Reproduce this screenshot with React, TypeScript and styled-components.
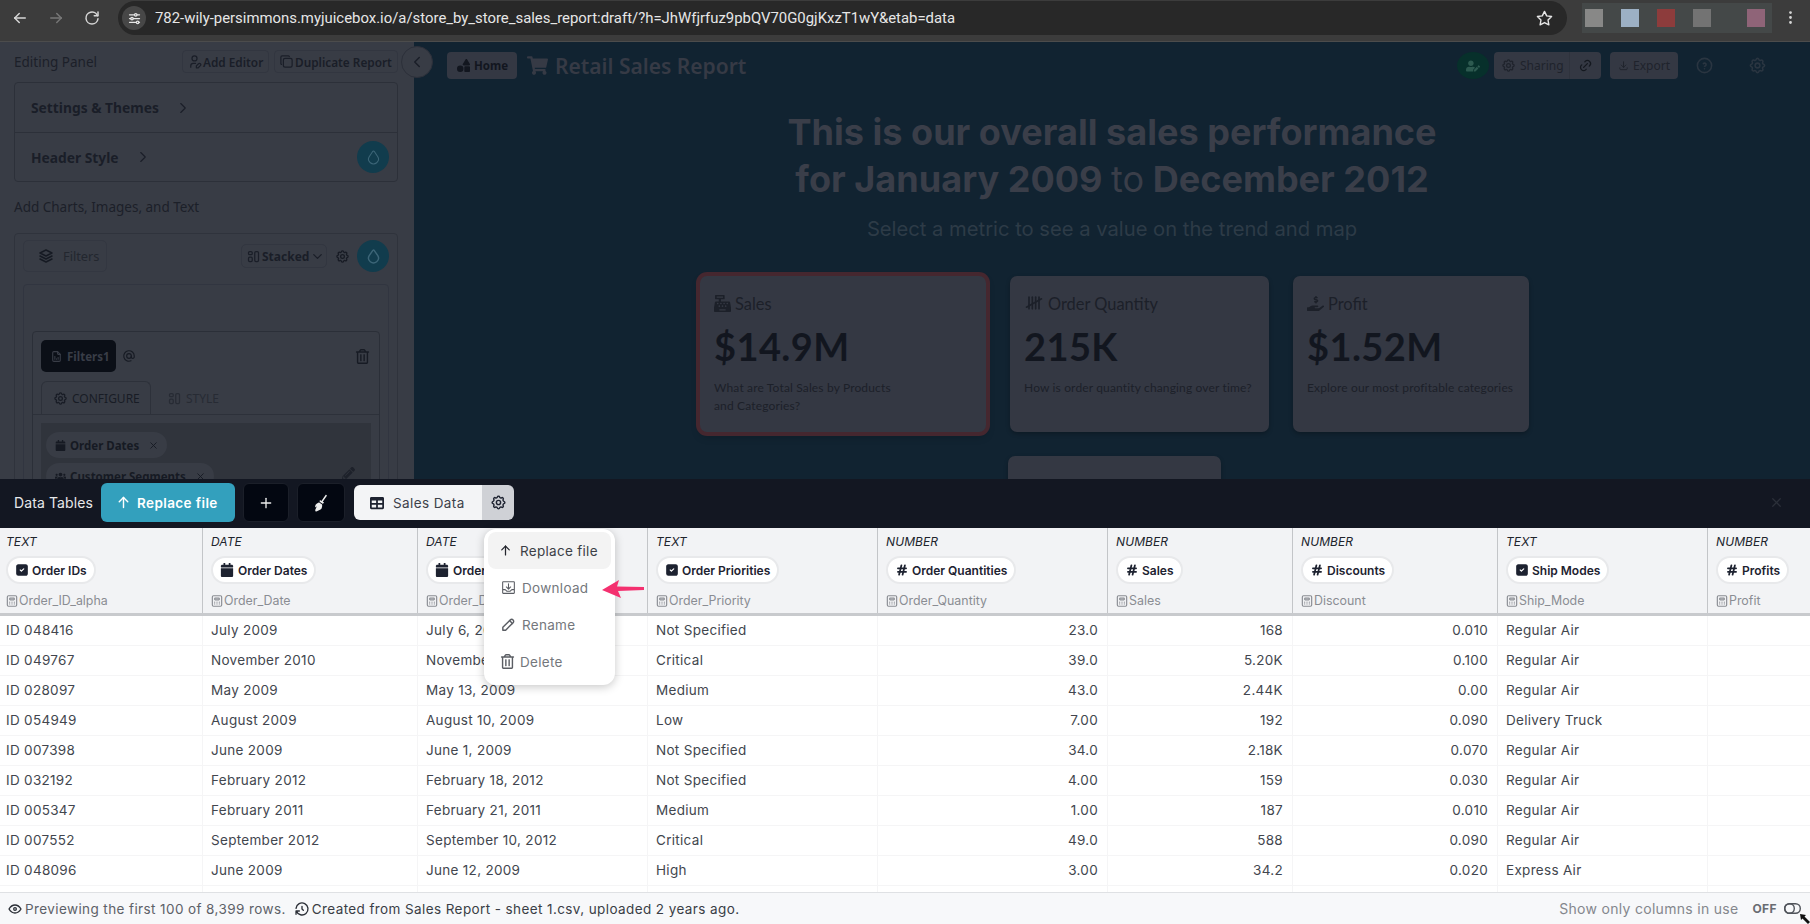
import React from "react";
import styled, { createGlobalStyle } from "styled-components";
import {
  TbArrowLeft,
  TbArrowRight,
  TbReload,
  TbStar,
  TbDotsVertical,
  TbAdjustmentsHorizontal,
  TbUserEdit,
  TbCopy,
  TbChevronRight,
  TbChevronLeft,
  TbChevronDown,
  TbDroplet,
  TbStack2,
  TbLayout,
  TbSettings,
  TbAt,
  TbFileAnalytics,
  TbX,
  TbLink,
  TbDownload,
  TbHelpCircle,
  TbTallymarks,
  TbArrowUp,
  TbPlus,
  TbCalculator,
  TbHash,
  TbSquareCheckFilled,
  TbEye,
  TbHistory,
  TbPencil,
} from "react-icons/tb";
import {
  FaCalendar,
  FaUsers,
  FaShapes,
  FaShoppingCart,
  FaCashRegister,
  FaHandHoldingUsd,
  FaBroom,
  FaTable,
  FaPencilAlt,
  FaUserEdit,
  FaRegTrashAlt,
} from "react-icons/fa";
import { PiTrayArrowDown } from "react-icons/pi";

const GlobalStyle = createGlobalStyle`
  html, body {
    margin: 0;
    padding: 0;
    background: #fff;
  }
  * {
    box-sizing: border-box;
  }
`;

const Page = styled.div`
  width: 1810px;
  height: 924px;
  display: flex;
  flex-direction: column;
  overflow: hidden;
  position: relative;
  font-family: "Inter", "Liberation Sans", sans-serif;
`;

/* browser chrome */
const BrowserBar = styled.div`
  height: 42px;
  flex: none;
  display: flex;
  align-items: flex-start;
  background: #3c3c3c;
  border-bottom: 1px solid #4c4c4c;
  padding-top: 1px;
  color: #dcdcdc;
`;

const NavButton = styled.span<{ $dim?: boolean }>`
  width: 36px;
  height: 34px;
  flex: none;
  display: flex;
  align-items: center;
  justify-content: center;
  font-size: 18px;
  color: ${(p) => (p.$dim ? "#777" : "#d6d6d6")};
`;

const NavGroup = styled.div`
  display: flex;
  padding-left: 2px;
  width: 118px;
  flex: none;
`;

const UrlPill = styled.div`
  width: 1449px;
  height: 34px;
  flex: none;
  display: flex;
  align-items: center;
  background: #282828;
  border-radius: 17px;
  padding: 0 14px 0 4px;
  color: #e6e6e6;
  font-family: "Roboto", sans-serif;
  font-size: 14.9px;
`;

const TuneBadge = styled.span`
  width: 24px;
  height: 24px;
  border-radius: 50%;
  background: #474747;
  display: flex;
  align-items: center;
  justify-content: center;
  font-size: 15px;
  margin-right: 9px;
`;

const UrlText = styled.span`
  flex: 1;
  white-space: nowrap;
`;

const Extensions = styled.div`
  width: 190px;
  height: 30px;
  margin: 2px 0 0 15px;
  flex: none;
  display: flex;
  align-items: center;
  padding-left: 3px;
  background: #444848;
`;

const ExtensionBlock = styled.span<{ $color: string; $gap: number }>`
  width: 18px;
  height: 18px;
  margin-right: ${(p) => p.$gap}px;
  background: ${(p) => p.$color};
`;

const MenuDots = styled.span`
  font-size: 17px;
  color: #d6d6d6;
  margin: 8px 0 0 10px;
  display: flex;
`;

/* dimmed report behind the data drawer */
const Workspace = styled.div`
  height: 437px;
  flex: none;
  display: flex;
  overflow: hidden;
  position: relative;
`;

const SidePanel = styled.div`
  width: 414px;
  flex: none;
  background: #383c45;
  padding: 8px 16px 0 14px;
  color: #1a1e28;
  font-family: "Noto Sans", sans-serif;
`;

const PanelTop = styled.div`
  display: flex;
  align-items: center;
  height: 23px;
  gap: 5px;
`;

const MutedLabel = styled.div`
  font-size: 13.5px;
  color: #1c2029;
`;

const PanelTitle = styled(MutedLabel)`
  flex: 1;
`;

const GhostButton = styled.span<{ $width: number }>`
  width: ${(p) => p.$width}px;
  height: 23px;
  flex: none;
  display: flex;
  align-items: center;
  gap: 1px;
  padding-left: 4px;
  border: 1px solid #323640;
  border-radius: 4px;
  font-size: 11.8px;
  font-weight: 600;
  white-space: nowrap;

  svg {
    font-size: 15px;
    flex: none;
  }
`;

const Accordion = styled.div`
  margin-top: 9px;
  border: 1px solid #2c3039;
  border-radius: 4px;
`;

const AccordionRow = styled.div`
  height: 49px;
  display: flex;
  align-items: center;
  padding: 0 8px 0 16px;
  font-size: 13.8px;
  font-weight: 700;
  gap: 15px;

  & + & {
    border-top: 1px solid #2c3039;
  }

  svg {
    font-size: 18px;
    stroke-width: 1.5;
  }
`;

const RoundSwatch = styled.span<{ $margin?: boolean }>`
  width: 32px;
  height: 32px;
  flex: none;
  border-radius: 50%;
  background: #113c4d;
  color: #3d6678;
  display: flex;
  align-items: center;
  justify-content: center;
  margin-left: ${(p) => (p.$margin ? "auto" : "0")};

  svg {
    font-size: 17px;
  }
`;

const SectionLabel = styled(MutedLabel)`
  margin-top: 16px;
  height: 35px;
  line-height: 18px;
`;

const ChartBox = styled.div`
  border: 1px solid #2f333c;
  border-radius: 4px 4px 0 0;
  padding: 6px 8px 0;
`;

const ChartBar = styled.div`
  display: flex;
  align-items: center;
  height: 32px;
`;

const FiltersButton = styled.span`
  width: 84px;
  height: 32px;
  display: flex;
  align-items: center;
  gap: 8px;
  padding-left: 13px;
  border: 1px solid #333741;
  border-radius: 5px;
  font-size: 12.8px;
  color: #23272f;

  svg {
    font-size: 18px;
    color: #161a23;
  }
`;

const StackedSelect = styled.span`
  margin-left: auto;
  width: 86px;
  height: 24px;
  display: flex;
  align-items: center;
  gap: 1px;
  padding-left: 4px;
  border: 1px solid #323640;
  border-radius: 5px;
  font-size: 12px;
  font-weight: 700;

  svg {
    font-size: 15px;
    flex: none;
  }
`;

const PlainIcon = styled.span<{ $size?: number }>`
  display: flex;
  align-items: center;
  justify-content: center;
  font-size: ${(p) => p.$size ?? 15}px;
  color: #171b24;
`;

const GearSlot = styled(PlainIcon)`
  width: 30px;
`;

const InnerBox = styled.div`
  margin-top: 12px;
  height: 200px;
  border: 1px solid #313540;
  border-radius: 4px 4px 0 0;
  padding: 46px 8px 0;
`;

const WidgetBox = styled.div`
  height: 200px;
  border: 1px solid #2b2f38;
  border-radius: 4px 4px 0 0;
  padding-top: 8px;
`;

const WidgetHead = styled.div`
  display: flex;
  align-items: center;
  gap: 6px;
  padding: 0 9px 0 8px;
  height: 32px;
`;

const WidgetName = styled.span`
  width: 75px;
  height: 32px;
  display: flex;
  align-items: center;
  gap: 4px;
  padding-left: 9px;
  background: #0b0f17;
  border-radius: 5px;
  color: #393d47;
  font-size: 11.5px;
  font-weight: 700;

  svg {
    font-size: 13px;
  }
`;

const TrashSlot = styled(PlainIcon)`
  margin-left: auto;
`;

const TabRow = styled.div`
  margin-top: 9px;
  height: 34px;
  display: flex;
  padding-left: 8px;
  border-bottom: 1px solid #2d313a;
`;

const TabItem = styled.span<{ $active?: boolean }>`
  display: flex;
  align-items: center;
  gap: 4px;
  height: 34px;
  width: ${(p) => (p.$active ? "110px" : "auto")};
  padding-left: ${(p) => (p.$active ? "11px" : "16px")};
  border: ${(p) => (p.$active ? "1px solid #2d313a" : "none")};
  border-bottom: none;
  border-radius: 6px 6px 0 0;
  font-size: 12px;
  color: ${(p) => (p.$active ? "#181c25" : "#272b34")};

  svg {
    font-size: 15px;
  }
`;

const ChipTray = styled.div`
  margin: 8px 8px 0;
  padding: 9px 5px;
  height: 100px;
  background: #30343c;
  display: flex;
  flex-direction: column;
  align-items: flex-start;
  gap: 5px;
  position: relative;
`;

const DimChip = styled.span`
  height: 26px;
  display: flex;
  align-items: center;
  gap: 4px;
  padding: 0 8px 0 9px;
  background: #383c45;
  border-radius: 13px;
  font-size: 11.5px;
  font-weight: 700;
  color: #161a23;

  svg {
    font-size: 11px;
  }
`;

const ChipClose = styled.span`
  display: flex;
  margin-left: 5px;
  font-size: 12px;
`;

const TrayPencil = styled.span`
  position: absolute;
  right: 16px;
  top: 43px;
  font-size: 13px;
  color: #1d212a;
`;

const CollapseHandle = styled.span`
  position: absolute;
  left: 401px;
  top: 4px;
  width: 32px;
  height: 32px;
  border-radius: 50%;
  background: #383c45;
  border: 1px solid #2c303a;
  display: flex;
  align-items: center;
  justify-content: center;
  font-size: 18px;
  color: #1a1e28;
`;

const ReportArea = styled.div`
  flex: 1;
  min-width: 0;
  background: #112331;
  font-family: "Lato", sans-serif;
`;

const ReportTop = styled.div`
  display: flex;
  align-items: center;
  height: 27px;
  margin-top: 10px;
  padding-left: 33px;
  font-family: "Noto Sans", sans-serif;
`;

const HomeButton = styled.span`
  width: 70px;
  height: 27px;
  display: flex;
  align-items: center;
  gap: 4px;
  padding-left: 10px;
  background: #343843;
  border-radius: 4px;
  color: #12161f;
  font-size: 11.5px;
  font-weight: 700;

  svg {
    font-size: 13px;
  }
`;

const ReportTitle = styled.div`
  display: flex;
  align-items: center;
  gap: 7px;
  margin-left: 10px;
  font-size: 21px;
  font-weight: 600;
  color: #363a45;
  white-space: nowrap;

  svg {
    font-size: 21px;
  }
`;

const TopActions = styled.div`
  margin-left: auto;
  display: flex;
  align-items: center;
  height: 27px;
  padding-right: 43px;
`;

const GreenBadge = styled.span`
  width: 32px;
  height: 27px;
  border-radius: 50%;
  background: #07302b;
  color: #2d5a50;
  display: flex;
  align-items: center;
  justify-content: center;
  font-size: 14px;
  margin-right: 5px;
`;

const ActionButton = styled.span`
  height: 27px;
  display: flex;
  align-items: center;
  gap: 4px;
  padding: 0 8px;
  background: #343843;
  border-radius: 4px;
  color: #1f232c;
  font-size: 12px;

  svg {
    font-size: 15px;
  }
`;

const SharingButton = styled(ActionButton)`
  width: 76px;
  padding: 0 0 0 7px;
  border-radius: 4px 0 0 4px;
  border-right: 1px solid #2f333d;
`;

const LinkButton = styled(ActionButton)`
  width: 31px;
  padding: 0 0 0 8px;
  border-radius: 0 4px 4px 0;
  color: #14181f;
`;

const ExportButton = styled(ActionButton)`
  width: 68px;
  margin-left: 9px;
`;

const QuietIcon = styled.span<{ $left: number }>`
  display: flex;
  margin-left: ${(p) => p.$left}px;
  font-size: 19px;
  color: #2a3541;
`;

const Headline = styled.h1`
  margin: 30px 0 0;
  text-align: center;
  font-family: "Inter", sans-serif;
  font-size: 36.1px;
  line-height: 47px;
  font-weight: 700;
  color: #3a3e49;
`;

const HeadlineLight = styled.span`
  font-weight: 400;
`;

const Subhead = styled.div`
  margin-top: 13px;
  text-align: center;
  font-family: "Inter", sans-serif;
  font-size: 20.2px;
  line-height: 26px;
  color: #2d3b47;
`;

const CardWrap = styled.div`
  margin: 34px auto 0;
  padding-left: 5px;
  width: 845px;
  display: flex;
  flex-wrap: wrap;
  justify-content: center;
  gap: 24px;
`;

const MetricCard = styled.div<{ $width: number; $active?: boolean }>`
  width: ${(p) => p.$width}px;
  height: 156px;
  padding: 17px 14px 0;
  background: #343843;
  border-radius: 7px;
  color: #12161f;
  box-shadow: ${(p) =>
    p.$active ? "0 0 0 4px #45272f, 0 4px 8px rgba(0,0,0,.25)" : "0 2px 4px rgba(0,0,0,.25)"};
`;

const MetricLabel = styled.div`
  display: flex;
  align-items: center;
  gap: 4px;
  height: 20px;
  font-size: 16.4px;
  color: #1c2029;

  svg {
    font-size: 17px;
  }
`;

const MetricValue = styled.div`
  margin-top: 11px;
  font-size: 38px;
  line-height: 44px;
  font-weight: 700;
  letter-spacing: 0.4px;
`;

const MetricText = styled.div`
  margin-top: 11px;
  font-size: 12px;
  letter-spacing: 0.15px;
  line-height: 18px;
  color: #1c2029;
  white-space: pre-line;
`;

/* data drawer */
const DrawerBar = styled.div`
  height: 49px;
  flex: none;
  background: #131722;
  display: flex;
  align-items: center;
  padding: 0 0 2px 14px;
  color: #e7e8ea;
  font-size: 14px;
  position: relative;
`;

const DrawerTitle = styled.span`
  width: 87px;
  flex: none;
  letter-spacing: 0.1px;
`;

const ReplaceButton = styled.span`
  width: 134px;
  height: 39px;
  display: flex;
  align-items: center;
  gap: 5px;
  padding-left: 14px;
  background: #33a0bd;
  border-radius: 6px;
  color: #fff;
  font-size: 13.5px;
  letter-spacing: 0.4px;
  font-weight: 600;
  white-space: nowrap;

  svg {
    font-size: 17px;
  }
`;

const DarkButton = styled.span<{ $width: number }>`
  width: ${(p) => p.$width}px;
  height: 39px;
  margin-left: 8px;
  display: flex;
  align-items: center;
  justify-content: center;
  background: #030711;
  border: 1px solid #1b1f29;
  border-radius: 6px;
  color: #eee;
  font-size: 16px;
`;

const BroomIcon = styled.span`
  display: flex;
  transform: rotate(-18deg);
`;

const SheetTab = styled.span`
  width: 128px;
  height: 35px;
  margin-left: 9px;
  display: flex;
  align-items: center;
  gap: 9px;
  padding-left: 16px;
  background: #f3f4f6;
  border-radius: 6px 0 0 6px;
  color: #3d414a;
  font-size: 13.5px;
  letter-spacing: 0.4px;

  svg {
    font-size: 14px;
    color: #1d2230;
  }
`;

const SheetGear = styled.span`
  width: 32px;
  height: 35px;
  display: flex;
  align-items: center;
  justify-content: center;
  background: #cfd1d6;
  border-radius: 0 6px 6px 0;
  color: #1d2230;
  font-size: 17px;
`;

const DrawerClose = styled.span`
  margin-left: auto;
  margin-right: 26px;
  display: flex;
  font-size: 15px;
  color: #2b2f39;
`;

const columnTemplate = "203px 215px 230px 230px 230px 185px 205px 210px 1fr";

const HeadRow = styled.div`
  height: 88px;
  flex: none;
  display: grid;
  grid-template-columns: ${columnTemplate};
  background: #f2f3f5;
  border-bottom: 3px solid #c8cacd;
`;

const HeadCell = styled.div`
  border-right: 1px solid #c3c5c8;
  padding: 7px 0 0 8px;
  overflow: hidden;

  &:first-child {
    padding-left: 6px;
  }

  &:last-child {
    border-right: none;
  }
`;

const TypeLabel = styled.div`
  font-size: 12px;
  line-height: 14px;
  font-style: italic;
  letter-spacing: 0.1px;
  color: #20242c;
`;

const FieldChip = styled.div`
  margin-top: 7px;
  width: fit-content;
  height: 28px;
  display: flex;
  align-items: center;
  gap: 3px;
  padding: 0 7px;
  background: #fff;
  border: 2px solid #e8e9eb;
  border-radius: 14px;
  font-size: 12px;
  font-weight: 600;
  color: #1d2230;
  white-space: nowrap;

  svg {
    font-size: 14px;
    flex: none;
  }
`;

const ChipCalendar = styled.span`
  display: flex;
  font-size: 11px;
  margin-right: 1px;
`;

const ChipHash = styled.span`
  display: flex;

  svg {
    stroke-width: 3;
  }
`;

const SourceLine = styled.div`
  margin-top: 9px;
  display: flex;
  align-items: center;
  margin-left: -1px;
  font-size: 12.4px;
  line-height: 15px;
  color: #8a8d93;

  svg {
    font-size: 14px;
    flex: none;
  }
`;

const BodyArea = styled.div`
  flex: 1;
  min-height: 0;
  display: flex;
  flex-direction: column;
  background: #fff;
`;

const BodyRow = styled.div<{ $filler?: boolean }>`
  display: grid;
  grid-template-columns: ${columnTemplate};
  height: ${(p) => (p.$filler ? "auto" : "30px")};
  flex: ${(p) => (p.$filler ? "1" : "none")};
  border-bottom: ${(p) => (p.$filler ? "none" : "1px solid #f5f5f6")};
`;

const BodyCell = styled.div<{ $num?: boolean }>`
  border-right: 1px solid #f5f5f6;
  padding: 0 ${(p) => (p.$num ? "9px" : "8px")};
  text-align: ${(p) => (p.$num ? "right" : "left")};
  font-size: 13.5px;
  letter-spacing: 0.3px;
  line-height: 29px;
  color: #42464e;
  white-space: nowrap;
  overflow: hidden;

  &:first-child {
    padding-left: 6px;
  }

  &:last-child {
    border-right: none;
  }
`;

const FooterBar = styled.div`
  height: 32px;
  flex: none;
  display: flex;
  align-items: center;
  padding: 0 9px 0 7px;
  background: #f7f8fa;
  border-top: 1px solid #dfe1e4;
  font-size: 13.5px;
  letter-spacing: 0.4px;
  color: #5d6168;
`;

const FooterItem = styled.span<{ $strong?: boolean }>`
  display: flex;
  align-items: center;
  gap: 2px;
  margin-right: 8px;
  white-space: nowrap;
  color: ${(p) => (p.$strong ? "#3a3e46" : "#5d6168")};

  svg {
    font-size: 16px;
    color: #2a2e36;
  }
`;

const FooterRight = styled.span`
  margin-left: auto;
  color: #84878d;
  font-size: 14px;
  letter-spacing: 0.3px;
`;

const OffLabel = styled.span`
  margin-left: 14px;
  font-size: 12px;
  font-weight: 700;
  color: #696c72;
`;

const ToggleIcon = styled.svg`
  margin-left: 7px;
  flex: none;
`;

const ResizeCursor = styled.svg`
  position: absolute;
  right: 0;
  bottom: 0;
`;

/* popover */
const Popover = styled.div`
  position: absolute;
  left: 484px;
  top: 529px;
  width: 131px;
  height: 156px;
  padding: 3px 4px 5px;
  background: #fff;
  border-radius: 12px;
  box-shadow: 0 2px 10px rgba(0, 0, 0, 0.22);
  display: flex;
  flex-direction: column;
`;

const PopItem = styled.div<{ $active?: boolean }>`
  height: 37px;
  display: flex;
  align-items: center;
  gap: ${(p) => (p.$active ? "7px" : "5px")};
  padding-left: ${(p) => (p.$active ? "10px" : "12px")};
  border-radius: 8px;
  background: ${(p) => (p.$active ? "#f3f3f3" : "transparent")};
  color: ${(p) => (p.$active ? "#3c3f46" : "#74777c")};
  font-size: 13.5px;
  letter-spacing: 0.3px;

  svg {
    font-size: 15px;
    color: ${(p) => (p.$active ? "#23262d" : "#5a5d63")};
    flex: none;
  }
`;

const PinkArrow = styled.svg`
  position: absolute;
  left: 602px;
  top: 577px;
`;

type Col = { type: string; name: string; source: string; kind: "check" | "date" | "num" };

const columns: Col[] = [
  { type: "TEXT", name: "Order IDs", source: "Order_ID_alpha", kind: "check" },
  { type: "DATE", name: "Order Dates", source: "Order_Date", kind: "date" },
  { type: "DATE", name: "Order Dates", source: "Order_Date", kind: "date" },
  { type: "TEXT", name: "Order Priorities", source: "Order_Priority", kind: "check" },
  { type: "NUMBER", name: "Order Quantities", source: "Order_Quantity", kind: "num" },
  { type: "NUMBER", name: "Sales", source: "Sales", kind: "num" },
  { type: "NUMBER", name: "Discounts", source: "Discount", kind: "num" },
  { type: "TEXT", name: "Ship Modes", source: "Ship_Mode", kind: "check" },
  { type: "NUMBER", name: "Profits", source: "Profit", kind: "num" },
];

const rows = [
  ["ID 048416", "July 2009", "July 6, 2009", "Not Specified", "23.0", "168", "0.010", "Regular Air", ""],
  ["ID 049767", "November 2010", "November 8, 2010", "Critical", "39.0", "5.20K", "0.100", "Regular Air", ""],
  ["ID 028097", "May 2009", "May 13, 2009", "Medium", "43.0", "2.44K", "0.00", "Regular Air", ""],
  ["ID 054949", "August 2009", "August 10, 2009", "Low", "7.00", "192", "0.090", "Delivery Truck", ""],
  ["ID 007398", "June 2009", "June 1, 2009", "Not Specified", "34.0", "2.18K", "0.070", "Regular Air", ""],
  ["ID 032192", "February 2012", "February 18, 2012", "Not Specified", "4.00", "159", "0.030", "Regular Air", ""],
  ["ID 005347", "February 2011", "February 21, 2011", "Medium", "1.00", "187", "0.010", "Regular Air", ""],
  ["ID 007552", "September 2012", "September 10, 2012", "Critical", "49.0", "588", "0.090", "Regular Air", ""],
  ["ID 048096", "June 2009", "June 12, 2009", "High", "3.00", "34.2", "0.020", "Express Air", ""],
];

const extensions = [
  { color: "#888887", gap: 18 },
  { color: "#9cb0c4", gap: 18 },
  { color: "#8d3c3c", gap: 18 },
  { color: "#737373", gap: 36 },
  { color: "#8f6478", gap: 0 },
];

const chipIcon = (kind: Col["kind"]) => {
  if (kind === "check") return <TbSquareCheckFilled />;
  if (kind === "date")
    return (
      <ChipCalendar>
        <FaCalendar />
      </ChipCalendar>
    );
  return (
    <ChipHash>
      <TbHash />
    </ChipHash>
  );
};

export default function App() {
  return (
    <Page>
      <GlobalStyle />
      <BrowserBar>
        <NavGroup>
          <NavButton>
            <TbArrowLeft />
          </NavButton>
          <NavButton $dim>
            <TbArrowRight />
          </NavButton>
          <NavButton>
            <TbReload />
          </NavButton>
        </NavGroup>
        <UrlPill>
          <TuneBadge>
            <TbAdjustmentsHorizontal />
          </TuneBadge>
          <UrlText>
            782-wily-persimmons.myjuicebox.io/a/store_by_store_sales_report:draft/?h=JhWfjrfuz9pbQV70G0gjKxzT1wY&etab=data
          </UrlText>
          <TbStar size={17} />
        </UrlPill>
        <Extensions>
          {extensions.map((e) => (
            <ExtensionBlock key={e.color} $color={e.color} $gap={e.gap} />
          ))}
        </Extensions>
        <MenuDots>
          <TbDotsVertical />
        </MenuDots>
      </BrowserBar>

      <Workspace>
        <SidePanel>
          <PanelTop>
            <PanelTitle>Editing Panel</PanelTitle>
            <GhostButton $width={87}>
              <TbUserEdit />
              Add Editor
            </GhostButton>
            <GhostButton $width={124}>
              <TbCopy />
              Duplicate Report
            </GhostButton>
          </PanelTop>
          <Accordion>
            <AccordionRow>
              Settings &amp; Themes
              <TbChevronRight />
            </AccordionRow>
            <AccordionRow>
              Header Style
              <TbChevronRight />
              <RoundSwatch $margin>
                <TbDroplet />
              </RoundSwatch>
            </AccordionRow>
          </Accordion>
          <SectionLabel>Add Charts, Images, and Text</SectionLabel>
          <ChartBox>
            <ChartBar>
              <FiltersButton>
                <TbStack2 />
                Filters
              </FiltersButton>
              <StackedSelect>
                <TbLayout />
                Stacked
                <TbChevronDown />
              </StackedSelect>
              <GearSlot>
                <TbSettings />
              </GearSlot>
              <RoundSwatch>
                <TbDroplet />
              </RoundSwatch>
            </ChartBar>
            <InnerBox>
              <WidgetBox>
                <WidgetHead>
                  <WidgetName>
                    <TbFileAnalytics />
                    Filters1
                  </WidgetName>
                  <PlainIcon $size={14}>
                    <TbAt />
                  </PlainIcon>
                  <TrashSlot>
                    <FaRegTrashAlt />
                  </TrashSlot>
                </WidgetHead>
                <TabRow>
                  <TabItem $active>
                    <TbSettings />
                    CONFIGURE
                  </TabItem>
                  <TabItem>
                    <TbLayout />
                    STYLE
                  </TabItem>
                </TabRow>
                <ChipTray>
                  <DimChip>
                    <FaCalendar />
                    Order Dates
                    <ChipClose>
                      <TbX />
                    </ChipClose>
                  </DimChip>
                  <DimChip>
                    <FaUsers />
                    Customer Segments
                    <ChipClose>
                      <TbX />
                    </ChipClose>
                  </DimChip>
                  <TrayPencil>
                    <FaPencilAlt />
                  </TrayPencil>
                </ChipTray>
              </WidgetBox>
            </InnerBox>
          </ChartBox>
        </SidePanel>
        <CollapseHandle>
          <TbChevronLeft />
        </CollapseHandle>

        <ReportArea>
          <ReportTop>
            <HomeButton>
              <FaShapes />
              Home
            </HomeButton>
            <ReportTitle>
              <FaShoppingCart />
              Retail Sales Report
            </ReportTitle>
            <TopActions>
              <GreenBadge>
                <FaUserEdit />
              </GreenBadge>
              <SharingButton>
                <TbSettings />
                Sharing
              </SharingButton>
              <LinkButton>
                <TbLink />
              </LinkButton>
              <ExportButton>
                <TbDownload />
                Export
              </ExportButton>
              <QuietIcon $left={17}>
                <TbHelpCircle />
              </QuietIcon>
              <QuietIcon $left={34}>
                <TbSettings />
              </QuietIcon>
            </TopActions>
          </ReportTop>
          <Headline>
            This is our overall sales performance
            <br />
            for January 2009 <HeadlineLight>to</HeadlineLight> December 2012
          </Headline>
          <Subhead>Select a metric to see a value on the trend and map</Subhead>
          <CardWrap>
            <MetricCard $width={286} $active>
              <MetricLabel>
                <FaCashRegister />
                Sales
              </MetricLabel>
              <MetricValue>$14.9M</MetricValue>
              <MetricText>{"What are Total Sales by Products\nand Categories?"}</MetricText>
            </MetricCard>
            <MetricCard $width={259}>
              <MetricLabel>
                <TbTallymarks size={20} />
                Order Quantity
              </MetricLabel>
              <MetricValue>215K</MetricValue>
              <MetricText>How is order quantity changing over time?</MetricText>
            </MetricCard>
            <MetricCard $width={236}>
              <MetricLabel>
                <FaHandHoldingUsd />
                Profit
              </MetricLabel>
              <MetricValue>$1.52M</MetricValue>
              <MetricText>Explore our most profitable categories</MetricText>
            </MetricCard>
            <MetricCard $width={213} />
          </CardWrap>
        </ReportArea>
      </Workspace>

      <DrawerBar>
        <DrawerTitle>Data Tables</DrawerTitle>
        <ReplaceButton>
          <TbArrowUp />
          Replace file
        </ReplaceButton>
        <DarkButton $width={46}>
          <TbPlus />
        </DarkButton>
        <DarkButton $width={48}>
          <BroomIcon>
            <FaBroom />
          </BroomIcon>
        </DarkButton>
        <SheetTab>
          <FaTable />
          Sales Data
        </SheetTab>
        <SheetGear>
          <TbSettings />
        </SheetGear>
        <DrawerClose>
          <TbX />
        </DrawerClose>
      </DrawerBar>

      <HeadRow>
        {columns.map((c, i) => (
          <HeadCell key={i}>
            <TypeLabel>{c.type}</TypeLabel>
            <FieldChip>
              {chipIcon(c.kind)}
              {c.name}
            </FieldChip>
            <SourceLine>
              <TbCalculator />
              {c.source}
            </SourceLine>
          </HeadCell>
        ))}
      </HeadRow>

      <BodyArea>
        {rows.map((r) => (
          <BodyRow key={r[0]}>
            {r.map((v, i) => (
              <BodyCell key={i} $num={columns[i].kind === "num"}>
                {v}
              </BodyCell>
            ))}
          </BodyRow>
        ))}
        <BodyRow $filler>
          {columns.map((_, i) => (
            <BodyCell key={i} />
          ))}
        </BodyRow>
      </BodyArea>

      <FooterBar>
        <FooterItem>
          <TbEye />
          Previewing the first 100 of 8,399 rows.
        </FooterItem>
        <FooterItem $strong>
          <TbHistory />
          Created from Sales Report - sheet 1.csv, uploaded 2 years ago.
        </FooterItem>
        <FooterRight>Show only columns in use</FooterRight>
        <OffLabel>OFF</OffLabel>
        <ToggleIcon width="17" height="11" viewBox="0 0 17 11" fill="none" stroke="#50545b" strokeWidth="1.4">
          <rect x="0.7" y="0.7" width="15.6" height="9.6" rx="4.8" />
          <circle cx="5.5" cy="5.5" r="4.8" />
        </ToggleIcon>
      </FooterBar>

      <Popover>
        <PopItem $active>
          <TbArrowUp />
          Replace file
        </PopItem>
        <PopItem>
          <PiTrayArrowDown size={17} />
          Download
        </PopItem>
        <PopItem>
          <TbPencil size={17} />
          Rename
        </PopItem>
        <PopItem>
          <FaRegTrashAlt />
          Delete
        </PopItem>
      </Popover>

      <PinkArrow width="44" height="24" viewBox="0 0 44 24">
        <path d="M0 13 L17 3 L15 9.5 L42 10 L42 13 L16 14 L19 21 Z" fill="#f4306f" />
      </PinkArrow>

      <ResizeCursor width="10" height="10" viewBox="0 0 10 10">
        <path d="M0 0 L6 1 L4.5 2.5 L10 8 L8 10 L2.5 4.5 L1 6 Z" fill="#111" />
      </ResizeCursor>
    </Page>
  );
}
